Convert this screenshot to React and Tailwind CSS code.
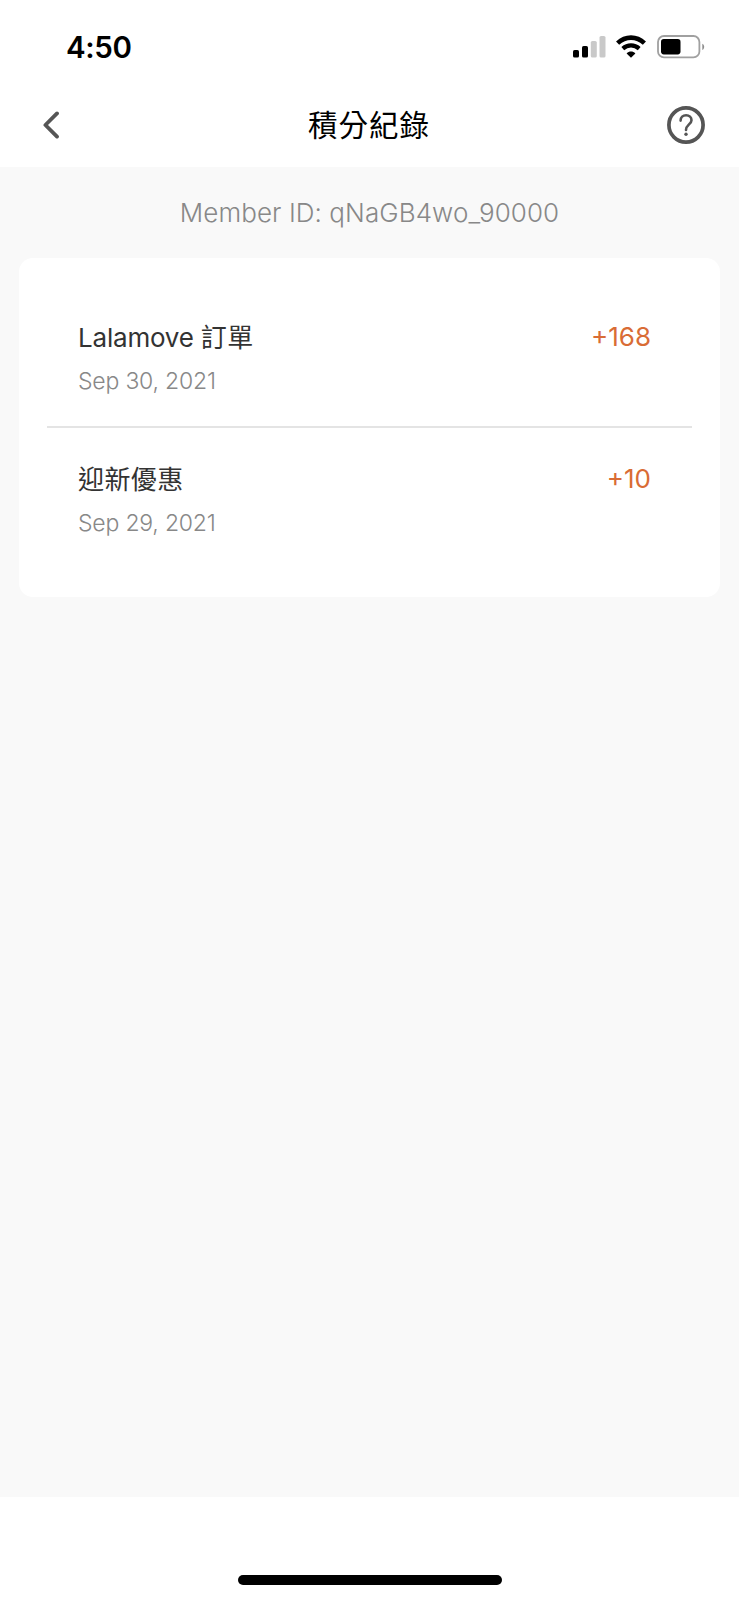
import React from 'react';

const records = [
  { id: 1, title: 'Lalamove', titleZh: '訂單', date: 'Sep 30, 2021', points: '+168' },
  { id: 2, title: '', titleZh: '迎新優惠', date: 'Sep 29, 2021', points: '+10' },
];

function StatusBar() {
  return (
    <div className="flex h-[94px] items-center justify-between pl-[66px] pr-[34px]">
      <span className="text-[29.5px] leading-[30px] font-semibold tracking-[-0.4px] text-black">4:50</span>
      <svg width="132" height="24" viewBox="0 0 132 24" fill="none">
        {/* signal */}
        <rect x="0" y="15" width="6" height="7.5" rx="1.6" fill="#000" />
        <rect x="9" y="11" width="6" height="11.5" rx="1.6" fill="#000" />
        <rect x="17.8" y="6" width="6" height="16.5" rx="1.6" fill="#c9c9c9" />
        <rect x="26.5" y="1" width="6" height="21.5" rx="1.6" fill="#c9c9c9" />
        {/* wifi */}
        <path d="M44.6 8.1C52.5 0.8 63.5 0.8 71.4 8.1" stroke="#000" strokeWidth="4.6" />
        <path d="M49.8 13.6C54.6 9.3 61.4 9.3 66.2 13.6" stroke="#000" strokeWidth="4.2" />
        <path d="M58 22.8L53.6 18.4C56.2 15.8 59.8 15.8 62.4 18.4Z" fill="#000" />
        {/* battery */}
        <rect x="85" y="1" width="41.4" height="21.4" rx="6" stroke="#a0a0a0" strokeWidth="1.8" />
        <rect x="88" y="4" width="19.5" height="15.4" rx="2.8" fill="#000" />
        <path d="M129.3 8.8C131.8 9.8 131.8 14 129.3 15Z" fill="#8c8c8c" />
      </svg>
    </div>
  );
}

function Header() {
  return (
    <div className="flex h-[73px] items-start justify-between pl-[42px] pr-[34px] pt-3">
      <button type="button" className="mt-[5px]">
        <svg width="18" height="28" viewBox="0 0 18 28" fill="none">
          <path d="M15 2.4L3.4 14L15 25.6" stroke="#555" strokeWidth="3.8" strokeLinecap="round" strokeLinejoin="round" />
        </svg>
      </button>
      <h1 className="pl-[11px] text-[29.5px] leading-[38px] tracking-[1px] text-black">積分紀錄</h1>
      <button type="button">
        <svg width="38" height="38" viewBox="0 0 38 38" fill="none">
          <circle cx="19" cy="19" r="17.1" stroke="#555" strokeWidth="3.7" />
          <path d="M13.6 14.6C13.6 11.4 15.9 9.3 19.1 9.3C22.3 9.3 24.5 11.4 24.5 14.2C24.5 18.2 19 18.8 19 23.9" stroke="#555" strokeWidth="2.6" strokeLinecap="round" />
          <circle cx="19" cy="28.3" r="1.7" fill="#555" />
        </svg>
      </button>
    </div>
  );
}

function RecordRow({ record }) {
  return (
    <div className="flex h-[142px] items-start justify-between pl-[31px] pr-[41px] pt-[33px]">
      <div>
        <p className="text-[26px] leading-[38px] tracking-[-0.2px] text-[#333]">
          {record.title && <span>{record.title} </span>}
          <span className="tracking-[0.4px]">{record.titleZh}</span>
        </p>
        <p className="mt-[9px] text-[23px] leading-[30px] font-light tracking-[-0.2px] text-[#888]">{record.date}</p>
      </div>
      <span className="text-[26px] leading-[35px] text-[#d96c35]">{record.points}</span>
    </div>
  );
}

function App() {
  return (
    <div className="flex h-[1600px] w-[739px] flex-col bg-white font-[Inter,'Noto_Sans_CJK_TC',sans-serif]">
      <StatusBar />
      <Header />

      <main className="h-[1330px] bg-[#f9f9f9] px-[19px]">
        <p className="pt-[26px] text-center text-[26px] leading-10 font-light tracking-[0.08px] text-[#888]">
          Member ID: qNaGB4wo_90000
        </p>
        <div className="mt-[25px] h-[339px] rounded-[14px] bg-white px-7 pt-[28px]">
          <div className="divide-y-2 divide-[#e4e4e4]">
            {records.map((record) => (
              <RecordRow key={record.id} record={record} />
            ))}
          </div>
        </div>
      </main>

      <footer className="flex flex-1 items-end justify-center pb-[15px]">
        <div className="h-[10px] w-[264px] rounded-full bg-black" />
      </footer>
    </div>
  );
}

export default App;
